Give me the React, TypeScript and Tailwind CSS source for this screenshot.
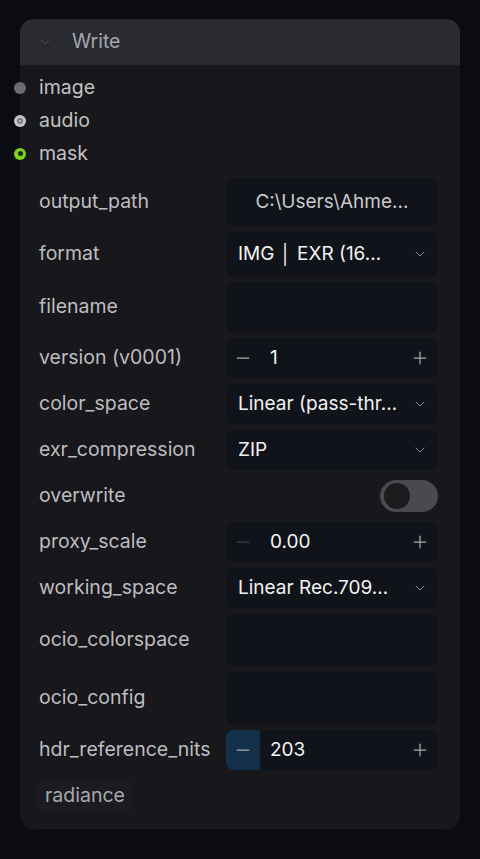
import { ChevronDown, Minus, Plus } from 'lucide-react'

const font = { fontFamily: 'Inter, "Noto Sans", sans-serif' }

const Combo = ({ value }: { value: string }) => (
    <div className="h-full rounded-lg bg-[#101319] flex items-center justify-between pl-3 pr-[10px]">
        <span className="text-[#f2f2f2] text-[19px] whitespace-nowrap overflow-hidden">{value}</span>
        <ChevronDown className="w-4 h-4 text-[#8d8f96] shrink-0" strokeWidth={1.5} />
    </div>
)

const NumberBox = ({ value, active, dim }: { value: string, active?: boolean, dim?: boolean }) => (
    <div className="h-full rounded-lg bg-[#101319] flex items-center overflow-hidden">
        <div className={`h-full w-[34px] flex items-center justify-center ${active ? 'bg-[#123049]' : ''}`}>
            <Minus className={`w-5 h-5 ${dim ? 'text-[#3c3f45]' : 'text-[#a8a9ad]'}`} strokeWidth={1.5} />
        </div>
        <span className="ml-[10px] text-[19px] text-[#f4f4f4] flex-1">{value}</span>
        <Plus className="w-5 h-5 mr-[8px] text-[#a8a9ad]" strokeWidth={1.5} />
    </div>
)

const TextBox = ({ value }: { value?: string }) => (
    <div className="h-full rounded-lg bg-[#101319] flex items-center justify-center px-3">
        {value && <span className="text-[19px] text-[#c9c9cb] whitespace-nowrap overflow-hidden">{value}</span>}
    </div>
)

const Toggle = () => (
    <div className="h-full flex items-center justify-end">
        <div className="w-[58px] h-[32px] rounded-full bg-[#4a4a4e] flex items-center px-[4px]">
            <div className="w-[26px] h-[26px] rounded-full bg-[#1b1b1e]" />
        </div>
    </div>
)

const rows: { label: string, h: string, el: React.ReactNode }[] = [
    { label: 'output_path', h: 'h-[48px]', el: <TextBox value="C:\Users\Ahme..." /> },
    { label: 'format', h: 'h-[44px]', el: <Combo value="IMG │ EXR (16…" /> },
    { label: 'filename', h: 'h-[50px]', el: <TextBox /> },
    { label: 'version (v0001)', h: 'h-[40px]', el: <NumberBox value="1" /> },
    { label: 'color_space', h: 'h-[40px]', el: <Combo value="Linear (pass-thr…" /> },
    { label: 'exr_compression', h: 'h-[40px]', el: <Combo value="ZIP" /> },
    { label: 'overwrite', h: 'h-[40px]', el: <Toggle /> },
    { label: 'proxy_scale', h: 'h-[40px]', el: <NumberBox value="0.00" dim /> },
    { label: 'working_space', h: 'h-[40px]', el: <Combo value="Linear Rec.709…" /> },
    { label: 'ocio_colorspace', h: 'h-[52px]', el: <TextBox /> },
    { label: 'ocio_config', h: 'h-[52px]', el: <TextBox /> },
    { label: 'hdr_reference_nits', h: 'h-[40px]', el: <NumberBox value="203" active /> },
]

const Dot = ({ kind }: { kind: 'image' | 'audio' | 'mask' }) => {
    if (kind === 'image') return <div className="w-3 h-3 rounded-full bg-[#6b6b70]" />
    if (kind === 'audio') return <div className="w-3 h-3 rounded-full bg-[#c4c4c4] flex items-center justify-center">
        <div className="w-[6px] h-[6px] rounded-full bg-[#7a7a7e] flex items-center justify-center">
            <div className="w-[2px] h-[2px] rounded-full bg-[#d0d0d0]" />
        </div>
    </div>
    return <div className="w-3 h-3 rounded-full bg-[#7ed321] flex items-center justify-center">
        <div className="w-[5px] h-[5px] rounded-full bg-[#1c2a12]" />
    </div>
}

const App = () => {
    return <div className="w-[480px] h-[859px] bg-[#0a0c11] pt-[19px] px-[20px] overflow-hidden" style={font}>
        <div className="rounded-[14px] bg-[#18171b] pb-[17px]">
            <div className="h-[46px] bg-[#2a2b31] rounded-t-[14px] flex items-center pl-[17px]">
                <ChevronDown className="w-4 h-4 text-[#4b4d55]" strokeWidth={1.5} />
                <span className="ml-[19px] text-[19.5px] text-[#a6a7ad]">Write</span>
            </div>
            <div className="pt-[6px]">
                {(['image', 'audio', 'mask'] as const).map(k => (
                    <div key={k} className="h-[33px] flex items-center -ml-[6px]">
                        <Dot kind={k} />
                        <span className="ml-[13px] text-[19.5px] text-[#c2c2c4]">{k}</span>
                    </div>
                ))}
            </div>
            <div className="mt-[8px] pl-[19px] pr-[22px] flex flex-col gap-[6px]">
                {rows.map(r => (
                    <div key={r.label} className={`grid grid-cols-[1fr_212px] items-center ${r.h}`}>
                        <span className="text-[19.5px] text-[#bdbdc0] whitespace-nowrap">{r.label}</span>
                        <div className="h-full">{r.el}</div>
                    </div>
                ))}
                <div className="mt-[4px] flex">
                    <div className="h-[32px] px-[8px] -ml-[2px] rounded-lg bg-[#1a1c22] flex items-center">
                        <span className="text-[19.5px] text-[#a9a9ac]">radiance</span>
                    </div>
                </div>
            </div>
        </div>
    </div>
}

export default App
